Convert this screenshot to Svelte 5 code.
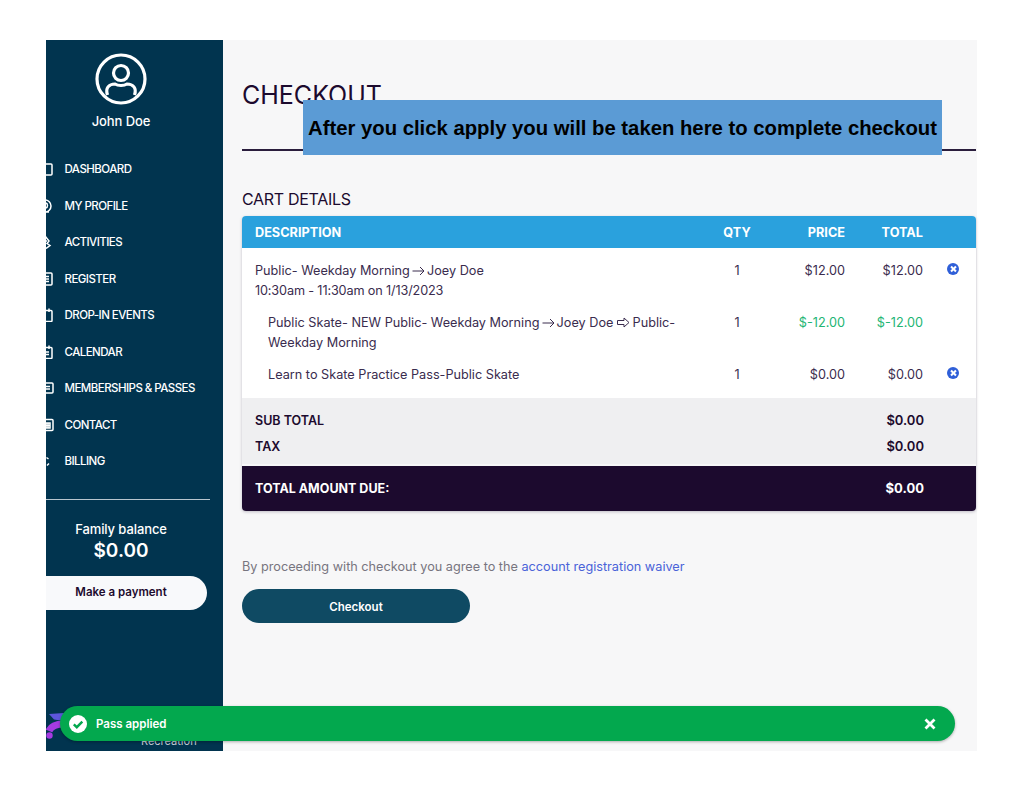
<script>
  // icons sit partly outside the left edge of the sidebar, only their right side shows
  const nav = [
    { label: "DASHBOARD", d: "M3 2h10a1 1 0 0 1 1 1v9a1 1 0 0 1-1 1H3" },
    { label: "MY PROFILE", d: "M7 1a6 6 0 0 1 0 12M7 4a2.5 2.5 0 0 1 0 5M4 13h7" },
    { label: "ACTIVITIES", d: "M7 1l4 5-2 2.5 3 2-4 3M5 6h4" },
    { label: "REGISTER", d: "M3 1h10a1 1 0 0 1 1 1v10a1 1 0 0 1-1 1H3M8 4.5h3M8 7h3M8 9.5h3" },
    { label: "DROP-IN EVENTS", d: "M3 2.5h10a1 1 0 0 1 1 1v9a1 1 0 0 1-1 1H3M11 0.5v3.5" },
    { label: "CALENDAR", d: "M3 2.5h10a1 1 0 0 1 1 1v9a1 1 0 0 1-1 1H3M11 0.5v3.5M8 7h3M8 9.5h3" },
    { label: "MEMBERSHIPS & PASSES", d: "M3 2h11a1 1 0 0 1 1 1v8a1 1 0 0 1-1 1H3M8 5.5h4M8 8h4" },
    { label: "CONTACT", d: "M3 1.5h11a1 1 0 0 1 1 1v9a1 1 0 0 1-1 1H3M8 5h4v5H8zM8 7.5h4M10 5v5" },
    { label: "BILLING", d: "M8.5 3.5l2 1.5M11 9.5l-2 2" }
  ];
</script>

<div class="page">
  <div class="frame">
    <aside class="sidebar">
      <svg class="avatar" viewBox="0 0 52 52" width="52" height="52" fill="none" stroke="#fff" stroke-width="3.2">
        <circle cx="26" cy="26" r="24" />
        <circle cx="26" cy="20" r="7.5" />
        <path d="M12.5 42 C10 35 14 31 20 31 C23 33 29 33 32 31 C38 31 42 35 39.5 42" />
      </svg>
      <div class="name">John Doe</div>
      <nav>
        {#each nav as item}
          <div class="nav-item">
            <svg class="nav-icon" viewBox="0 0 16 14" width="16" height="14" fill="none" stroke="#fff" stroke-width="1.5">
              <path d={item.d} />
            </svg>
            {item.label}
          </div>
        {/each}
      </nav>
      <hr />
      <div class="balance-label">Family balance</div>
      <div class="balance">$0.00</div>
      <div class="pay">Make a payment</div>
      <svg class="logo" viewBox="0 0 18 26" width="18" height="26" fill="none">
        <path d="M3 1 L18 0 L18 8 L8 6.5z" fill="#5d56dc" />
        <path d="M3 18 C5 13 10 11 18 11" stroke="#a63be2" stroke-width="7" />
        <circle cx="3.5" cy="22.5" r="3.2" fill="#a63be2" />
      </svg>
      <div class="brand">Recreation</div>
    </aside>

    <main>
      <h1>CHECKOUT</h1>
      <h2>CART DETAILS</h2>
      <div class="cart">
        <div class="row head">
          <div>DESCRIPTION</div>
          <div class="qty">QTY</div>
          <div class="num">PRICE</div>
          <div class="num">TOTAL</div>
          <div></div>
        </div>
        <div class="row item first">
          <div>
            Public- Weekday Morning
            <svg class="arrow thin" viewBox="0 0 13 10" width="13" height="10" fill="none" stroke="#3a2c4e" stroke-width="1"><path d="M0.5 5h11.5M8 1l4 4-4 4" /></svg>
            Joey Doe<br /><span class="time">10:30am - 11:30am on 1/13/2023</span>
          </div>
          <div class="qty">1</div>
          <div class="num">$12.00</div>
          <div class="num">$12.00</div>
          <div class="rm"><span class="remove"></span></div>
        </div>
        <div class="row item">
          <div class="sub">
            Public Skate- NEW Public- Weekday Morning
            <svg class="arrow thin" viewBox="0 0 13 10" width="13" height="10" fill="none" stroke="#3a2c4e" stroke-width="1"><path d="M0.5 5h11.5M8 1l4 4-4 4" /></svg>
            Joey Doe
            <svg class="arrow hollow" viewBox="0 0 13 11" width="13" height="11" fill="none" stroke="#3a2c4e" stroke-width="1"><path d="M0.5 3.5h6.5V1l5 4.5-5 4.5V7.5H0.5z" /></svg>
            Public-<br />Weekday Morning
          </div>
          <div class="qty">1</div>
          <div class="num green">$-12.00</div>
          <div class="num green">$-12.00</div>
          <div></div>
        </div>
        <div class="row item last">
          <div class="sub">Learn to Skate Practice Pass-Public Skate</div>
          <div class="qty">1</div>
          <div class="num">$0.00</div>
          <div class="num">$0.00</div>
          <div class="rm"><span class="remove"></span></div>
        </div>
        <div class="totals">
          <div class="total-line"><span>SUB TOTAL</span><span class="amount">$0.00</span></div>
          <div class="total-line"><span>TAX</span><span class="amount">$0.00</span></div>
        </div>
        <div class="due"><span>TOTAL AMOUNT DUE:</span><span class="amount">$0.00</span></div>
      </div>
      <p class="agree">By proceeding with checkout you agree to the <a href="#waiver">account registration waiver</a></p>
      <button class="checkout">Checkout</button>
    </main>

    <div class="callout">After you click apply you will be taken here to complete checkout</div>

    <div class="toast">
      <svg class="check" viewBox="0 0 18 18" width="18" height="18">
        <circle cx="9" cy="9" r="9" fill="#fff" />
        <path d="M4.8 9.3 L7.8 12.2 L13.3 6.6" fill="none" stroke="#03a84e" stroke-width="2.4" />
      </svg>
      <span>Pass applied</span>
      <svg class="close" viewBox="0 0 12 12" width="12" height="12">
        <path d="M1.5 1.5 L10.5 10.5 M10.5 1.5 L1.5 10.5" stroke="#fff" stroke-width="2.8" />
      </svg>
    </div>
  </div>
</div>

<style>
  :global(body) {
    background: #fff;
  }

  .page {
    width: 1024px;
    height: 791px;
    padding: 40px 47px 40px 46px;
    box-sizing: border-box;
    font-family: "Inter", "Liberation Sans", sans-serif;
  }

  .frame {
    position: relative;
    display: flex;
    height: 711px;
    background: #f7f7f8;
  }

  .sidebar {
    position: relative;
    width: 177px;
    flex: none;
    overflow: hidden;
    background: #01344f;
    color: #fff;
    display: flex;
    flex-direction: column;
  }

  .avatar {
    margin: 13px 0 0 49px;
  }

  .name {
    margin: 8px 0 0;
    width: 150px;
    text-align: center;
    font-size: 13px;
    font-weight: 500;
    letter-spacing: -0.1px;
  }

  nav {
    margin-top: 22px;
  }

  .nav-item {
    display: flex;
    align-items: center;
    height: 36.5px;
    font-size: 11.5px;
    font-weight: 500;
    letter-spacing: -0.55px;
    white-space: pre;
  }

  .nav-icon {
    flex: none;
    margin: 0 8px 0 -8px;
  }

  hr {
    width: 164px;
    margin: 19px 0 0;
    border: 0;
    border-top: 1px solid #b9c6cf;
  }

  .balance-label {
    width: 150px;
    margin-top: 21px;
    text-align: center;
    font-size: 13px;
    font-weight: 500;
    letter-spacing: -0.1px;
  }

  .balance {
    width: 150px;
    margin-top: 2px;
    text-align: center;
    font-size: 19px;
    font-weight: 600;
  }

  .pay {
    width: 161px;
    height: 34px;
    margin-top: 14px;
    border-radius: 0 17px 17px 0;
    background: #f8f9fb;
    color: #1c0a2e;
    font-size: 11.5px;
    font-weight: 600;
    line-height: 33px;
    text-align: center;
    box-sizing: border-box;
    padding-right: 11px;
  }

  .logo {
    position: absolute;
    left: 0;
    top: 673px;
  }

  .brand {
    position: absolute;
    left: 95px;
    bottom: 3px;
    font-size: 11px;
    color: #c6d0d8;
  }

  main {
    flex: 1;
    min-width: 0;
    padding: 0 1px 0 19px;
    color: #1c0a2e;
  }

  h1 {
    margin: 0;
    padding-top: 40px;
    height: 111px;
    box-sizing: border-box;
    border-bottom: 2px solid #2a1d3d;
    font-size: 25px;
    line-height: 30px;
    font-weight: 400;
  }

  h2 {
    margin: 38px 0 0;
    font-size: 16px;
    line-height: 20px;
    font-weight: 400;
    letter-spacing: -0.3px;
  }

  .cart {
    margin-top: 7px;
    border-radius: 4px;
    overflow: hidden;
    background: #fff;
    box-shadow: 0 1px 3px rgba(30, 20, 50, 0.25);
  }

  .row {
    display: grid;
    grid-template-columns: 1fr 50px 83px 78px 53px;
    padding-left: 13px;
  }

  .head {
    height: 32px;
    align-items: center;
    background: #2aa1dd;
    color: #fff;
    font-size: 12.7px;
    font-weight: 700;
  }

  .item {
    padding-top: 7px;
    padding-bottom: 5px;
    font-size: 12.7px;
    line-height: 20px;
    color: #3a2c4e;
  }

  .first {
    padding-top: 13px;
  }

  .last {
    padding-bottom: 13px;
  }

  .sub {
    padding: 0 20px 0 13px;
  }

  .time {
    letter-spacing: -0.15px;
  }

  .arrow {
    vertical-align: -1px;
  }

  .thin {
    margin: 0 -1.5px;
  }

  .hollow {
    margin-right: -1px;
  }

  .qty {
    text-align: center;
  }

  .num {
    text-align: right;
  }

  .green {
    color: #22b573;
  }

  .rm {
    padding: 2px 0 0 24px;
  }

  .remove {
    position: relative;
    display: block;
    width: 12px;
    height: 12px;
    border-radius: 50%;
    background: #2f5fd8;
  }

  .remove::before,
  .remove::after {
    content: "";
    position: absolute;
    left: 2.5px;
    top: 5px;
    width: 7px;
    height: 2px;
    background: #fff;
    transform: rotate(45deg);
  }

  .remove::after {
    transform: rotate(-45deg);
  }

  .totals {
    padding: 10px 52px 4px 13px;
    background: #efeff1;
    border-bottom: 2px solid #f7f7f8;
  }

  .total-line {
    display: flex;
    justify-content: space-between;
    height: 26px;
    line-height: 26px;
    font-size: 12.5px;
    font-weight: 600;
  }

  .amount {
    font-size: 13px;
    line-height: 25px;
  }

  .due {
    display: flex;
    justify-content: space-between;
    align-items: center;
    height: 45px;
    padding: 0 52px 0 13px;
    background: #1c0a2e;
    color: #fff;
    font-size: 12.5px;
    font-weight: 700;
  }

  .agree {
    margin: 47px 0 0;
    font-size: 12.7px;
    line-height: 18px;
    color: #77757f;
  }

  .agree a {
    color: #4a63d8;
    text-decoration: none;
  }

  .checkout {
    display: block;
    width: 228px;
    height: 34px;
    margin-top: 13px;
    padding: 1px 0 0;
    border: 0;
    border-radius: 17px;
    background: #0f4a63;
    color: #fff;
    font: 600 11.5px "Inter", "Liberation Sans", sans-serif;
  }

  .callout {
    position: absolute;
    left: 257px;
    top: 60px;
    width: 639px;
    height: 55px;
    background: #5b9bd5;
    color: #000;
    font: 700 20.3px/56px "Liberation Sans", sans-serif;
    text-align: center;
    white-space: nowrap;
  }

  .toast {
    position: absolute;
    left: 14px;
    top: 666px;
    width: 895px;
    height: 35px;
    box-sizing: border-box;
    padding: 0 19px 0 9px;
    display: flex;
    align-items: center;
    border-radius: 18px;
    background: #03a84e;
    box-shadow: 0 1px 3px rgba(0, 0, 0, 0.3);
    color: #fff;
    font-size: 11.5px;
    font-weight: 600;
  }

  .toast span {
    margin-left: 9px;
    flex: 1;
  }
</style>
